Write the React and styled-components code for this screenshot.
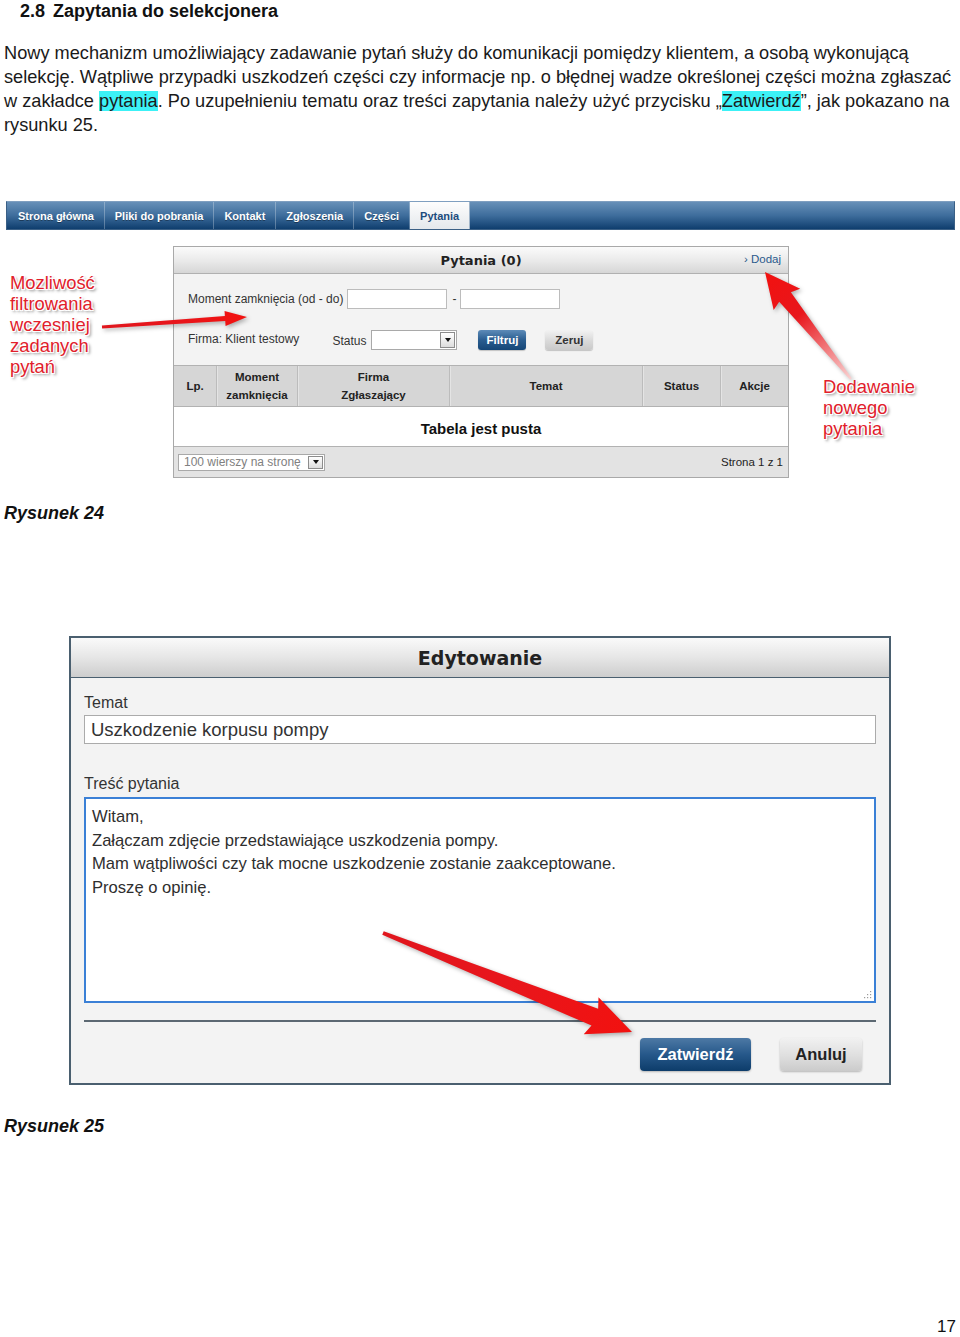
import React from 'react';
import styled, { createGlobalStyle } from 'styled-components';

const Global = createGlobalStyle`
  html, body { margin: 0; padding: 0; background: #fff; overflow: hidden; }
  body { font-family: "Liberation Sans", Arial, sans-serif; color: #111; }
`;

const Page = styled.div`
  width: 960px;
  height: 1337px;
  overflow: hidden;
  display: flex;
  flex-direction: column;
  box-sizing: border-box;
`;

const Heading = styled.h2`
  margin: 0;
  padding-left: 20px;
  display: flex;
  gap: 8px;
  font-size: 18px;
  line-height: 22px;
  font-weight: bold;
  color: #111;
`;

const Para = styled.p`
  margin: 19px 0 0 4px;
  font-size: 18.2px;
  line-height: 24px;
  white-space: nowrap;
  color: #1a1a1a;
`;

const Mark = styled.span`
  background: #3cf1f6;
`;

const Caption = styled.div`
  margin-top: ${p => p.$top}px;
  padding-left: 4px;
  font-size: 18px;
  line-height: 22px;
  font-weight: bold;
  font-style: italic;
  color: #111;
`;

/* ---------- Figure 24 ---------- */
const Figure = styled.div`
  position: relative;
  margin-top: 64px;
  padding: 0 5px 0 6px;
`;

const NavBar = styled.div`
  height: 29px;
  display: flex;
  box-sizing: border-box;
  border: 1px solid #3a5f85;
  border-top-color: #7f9fc0;
  background: linear-gradient(#6790b8, #3e6d9c 50%, #0f3e6e);
`;

const Tab = styled.div`
  display: flex;
  align-items: center;
  padding: 0 10px 0 ${p => (p.$first ? 11 : 10)}px;
  font-size: 11px;
  font-weight: bold;
  color: ${p => (p.$active ? '#1d4c7d' : '#fff')};
  background: ${p => (p.$active ? 'linear-gradient(#fdfdfd, #e4e8ec)' : 'transparent')};
  border-right: 1px solid ${p => (p.$active ? '#9fb4c9' : 'rgba(255,255,255,0.28)')};
  text-shadow: ${p => (p.$active ? 'none' : '0 1px 0 rgba(0,0,0,0.35)')};
`;

const FigRow = styled.div`
  display: grid;
  grid-template-columns: 167px 616px 1fr;
  margin-top: 16px;
`;

const Callout = styled.div`
  padding-top: ${p => p.$top}px;
  padding-left: ${p => p.$left}px;
  font-size: 18.4px;
  line-height: 21px;
  color: #e1202b;
  text-shadow: -1px -1px 0 #fff, 1px -1px 0 #fff, -1px 1px 0 #fff, 1px 1px 0 #fff,
    2px 2px 3px rgba(0, 0, 0, 0.55);
`;

const Panel = styled.div`
  border: 1px solid #a9a9a9;
  background: #f3f3f3;
  display: flex;
  flex-direction: column;
`;

const PanelHead = styled.div`
  position: relative;
  height: 26px;
  display: flex;
  align-items: center;
  justify-content: center;
  border-bottom: 1px solid #b0b0b0;
  background: linear-gradient(#fbfbfb, #e9e9e9 55%, #d6d6d6);
  font-family: "DejaVu Sans", Verdana, sans-serif;
  font-size: 13px;
  font-weight: bold;
  color: #222;
`;

const HeadLink = styled.span`
  position: absolute;
  right: 7px;
  top: 6px;
  font-family: "Liberation Sans", Arial, sans-serif;
  font-size: 11.5px;
  font-weight: normal;
  color: #2a5a8c;
`;

const Filters = styled.div`
  height: 91px;
  box-sizing: border-box;
  padding: 15px 14px 0;
  display: flex;
  flex-direction: column;
  gap: 21px;
  font-size: 12px;
  color: #333;
`;

const FRow = styled.div`
  height: 20px;
  display: flex;
  align-items: center;
`;

const FLabel = styled.span`
  margin-right: ${p => p.$mr || 0}px;
  margin-top: ${p => p.$mt || 0}px;
`;

const FInput = styled.input`
  width: ${p => p.$w}px;
  height: 20px;
  box-sizing: border-box;
  border: 1px solid #bcbcbc;
  background: #fff;
  padding: 0;
  margin: 0;
`;

const Dash = styled.span`
  margin: 0 4px 0 5px;
`;

const SelectBox = styled.div`
  width: ${p => p.$w}px;
  height: ${p => p.$h}px;
  box-sizing: border-box;
  display: flex;
  align-items: center;
  justify-content: space-between;
  padding-left: 5px;
  border: 1px solid #a9a9a9;
  background: #fff;
  font-size: 12px;
  color: #808080;
  margin-right: ${p => p.$mr || 0}px;
`;

const SelectBtn = styled.span`
  width: 15px;
  height: calc(100% - 2px);
  margin-right: 1px;
  box-sizing: border-box;
  border: 1px solid #8c8c8c;
  background: linear-gradient(#fff, #dcdcdc);
  display: flex;
  align-items: center;
  justify-content: center;
  &::after {
    content: '';
    border-left: 3px solid transparent;
    border-right: 3px solid transparent;
    border-top: 4px solid #111;
  }
`;

const SmallBtn = styled.div`
  width: 48px;
  height: 20px;
  border-radius: 3px;
  display: flex;
  align-items: center;
  justify-content: center;
  font-size: 11.5px;
  font-weight: bold;
  margin-right: ${p => p.$mr || 0}px;
  color: ${p => (p.$primary ? '#fff' : '#333')};
  background: ${p =>
    p.$primary ? 'linear-gradient(#5d8bb8, #2a5d90 50%, #154677)' : 'linear-gradient(#f2f2f2, #d9d9d9 55%, #c9c9c9)'};
  box-shadow: 0 1px 1px rgba(0, 0, 0, 0.2);
`;

const TableHead = styled.div`
  height: 42px;
  box-sizing: border-box;
  display: grid;
  grid-template-columns: 42px 81px 152px 193px 78px 1fr;
  border-top: 1px solid #b2b2b2;
  border-bottom: 1px solid #b2b2b2;
  background: #d6d6d6;
`;

const Th = styled.div`
  display: flex;
  align-items: center;
  justify-content: center;
  text-align: center;
  font-size: 11.5px;
  line-height: 18px;
  font-weight: bold;
  color: #222;
  border-left: ${p => (p.$first ? 'none' : '1px solid #bcbcbc')};
  box-shadow: ${p => (p.$first ? 'none' : 'inset 1px 0 0 #e4e4e4')};
`;

const EmptyRow = styled.div`
  height: 40px;
  box-sizing: border-box;
  display: flex;
  align-items: center;
  justify-content: center;
  padding-top: 3px;
  background: #fff;
  border-bottom: 1px solid #b2b2b2;
  font-size: 15px;
  font-weight: bold;
  color: #111;
`;

const Footer = styled.div`
  height: 30px;
  display: flex;
  align-items: center;
  justify-content: space-between;
  padding: 0 5px 0 4px;
  background: #e3e3e3;
  font-size: 11.5px;
  color: #222;
`;

const Overlay = styled.svg`
  position: absolute;
  left: ${p => p.$x || 0}px;
  top: ${p => p.$y || 0}px;
  overflow: visible;
  pointer-events: none;
  z-index: 2;
  filter: drop-shadow(2px 2px 2px rgba(0, 0, 0, 0.3));
`;

/* ---------- Figure 25 ---------- */
const EditPanel = styled.div`
  position: relative;
  margin: 112px 0 0 69px;
  width: 822px;
  height: 450px;
  box-sizing: border-box;
  border: 2px solid #4a5f6f;
  background: #f3f3f3;
  display: flex;
  flex-direction: column;
`;

const EditHead = styled.div`
  height: 39px;
  display: flex;
  align-items: center;
  justify-content: center;
  border-bottom: 1px solid #4a5f6f;
  background: linear-gradient(#fafafa, #e6e6e6 50%, #cdcdcd);
  font-family: "DejaVu Sans", Verdana, sans-serif;
  font-size: 19px;
  font-weight: bold;
  color: #222;
`;

const EditBody = styled.div`
  padding: 15px 13px 0 13px;
  display: flex;
  flex-direction: column;
`;

const FieldLabel = styled.div`
  font-size: 16px;
  line-height: 20px;
  color: #333;
  margin-top: ${p => p.$top || 0}px;
`;

const TextInput = styled.input`
  margin-top: 2px;
  height: 29px;
  width: 100%;
  box-sizing: border-box;
  border: 1px solid #ababab;
  background: #fff;
  padding: 0 6px;
  font-family: "Liberation Sans", Arial, sans-serif;
  font-size: 18.5px;
  color: #333;
  outline: none;
`;

const TextArea = styled.div`
  position: relative;
  margin-top: 3px;
  height: 206px;
  box-sizing: border-box;
  border: 2px solid #3b80d6;
  background: #fff;
  padding: 6px 6px;
  font-size: 16.6px;
  line-height: 23.5px;
  color: #2e2e2e;
  white-space: pre-line;
`;

const Grip = styled.svg`
  position: absolute;
  right: 2px;
  bottom: 2px;
`;

const Divider = styled.div`
  margin-top: 17px;
  height: 2px;
  background: #5c6872;
`;

const BtnRow = styled.div`
  margin-top: 16px;
  padding-right: 14px;
  display: flex;
  justify-content: flex-end;
  gap: 29px;
`;

const BigBtn = styled.div`
  width: ${p => p.$w}px;
  height: 33px;
  border-radius: 4px;
  display: flex;
  align-items: center;
  justify-content: center;
  font-size: 16.5px;
  font-weight: bold;
  color: ${p => (p.$primary ? '#fff' : '#222')};
  background: ${p =>
    p.$primary ? 'linear-gradient(#4d79a5, #26588a 50%, #0d3c6a)' : 'linear-gradient(#f1f1f1, #dedede 55%, #cbcbcb)'};
  box-shadow: 0 1px 2px rgba(0, 0, 0, 0.25);
`;

const PageNum = styled.div`
  margin-top: 180px;
  align-self: flex-end;
  padding-right: 4px;
  font-size: 17px;
  line-height: 20px;
  color: #111;
`;

function Arrow({ id, from, to, tail, neck, headW, headL, sweep = 0, fade }) {
  const dx = to[0] - from[0];
  const dy = to[1] - from[1];
  const L = Math.hypot(dx, dy);
  const ang = (Math.atan2(dy, dx) * 180) / Math.PI;
  const b = L - headL;
  const pts = [
    [0, -tail],
    [b, -neck],
    [b - sweep, -headW],
    [L, 0],
    [b - sweep, headW],
    [b, neck],
    [0, tail],
  ]
    .map(p => p.join(','))
    .join(' ');
  return (
    <g transform={`translate(${from[0]} ${from[1]}) rotate(${ang})`}>
      <defs>
        <linearGradient id={id} gradientUnits="userSpaceOnUse" x1="0" y1="0" x2={L} y2="0">
          <stop offset="0" stopColor={fade ? '#f9d2d2' : '#e0161d'} />
          <stop offset={fade ? 0.6 : 0.5} stopColor="#e8161c" />
          <stop offset="1" stopColor="#f2110f" />
        </linearGradient>
      </defs>
      <polygon points={pts} fill={`url(#${id})`} />
    </g>
  );
}

const tabs = ['Strona główna', 'Pliki do pobrania', 'Kontakt', 'Zgłoszenia', 'Części'];

export default function App() {
  return (
    <Page>
      <Global />
      <Heading>
        <span>2.8</span>
        <span>Zapytania do selekcjonera</span>
      </Heading>
      <Para>
        Nowy mechanizm umożliwiający zadawanie pytań służy do komunikacji pomiędzy klientem, a osobą wykonującą
        <br />
        selekcję. Wątpliwe przypadki uszkodzeń części czy informacje np. o błędnej wadze określonej części można zgłaszać
        <br />
        w zakładce <Mark>pytania</Mark>. Po uzupełnieniu tematu oraz treści zapytania należy użyć przycisku „<Mark>Zatwierdź</Mark>”, jak pokazano na
        <br />
        rysunku 25.
      </Para>

      <Figure>
        <NavBar>
          {tabs.map((t, i) => (
            <Tab key={t} $first={i === 0}>
              {t}
            </Tab>
          ))}
          <Tab $active>Pytania</Tab>
        </NavBar>
        <FigRow>
          <Callout $top={26} $left={4}>
            Mozliwość
            <br />
            filtrowania
            <br />
            wczesniej
            <br />
            zadanych
            <br />
            pytań
          </Callout>
          <Panel>
            <PanelHead>
              Pytania (0)
              <HeadLink>› Dodaj</HeadLink>
            </PanelHead>
            <Filters>
              <FRow>
                <FLabel $mr={4}>Moment zamknięcia (od - do)</FLabel>
                <FInput $w={100} readOnly />
                <Dash>-</Dash>
                <FInput $w={100} readOnly />
              </FRow>
              <FRow>
                <FLabel $mr={33} $mt={-2}>Firma: Klient testowy</FLabel>
                <FLabel $mr={5} $mt={2}>Status</FLabel>
                <SelectBox $w={86} $h={20} $mr={21}>
                  <span />
                  <SelectBtn />
                </SelectBox>
                <SmallBtn $primary $mr={19}>Filtruj</SmallBtn>
                <SmallBtn>Zeruj</SmallBtn>
              </FRow>
            </Filters>
            <TableHead>
              <Th $first>Lp.</Th>
              <Th>
                Moment
                <br />
                zamknięcia
              </Th>
              <Th>
                Firma
                <br />
                Zgłaszający
              </Th>
              <Th>Temat</Th>
              <Th>Status</Th>
              <Th>Akcje</Th>
            </TableHead>
            <EmptyRow>Tabela jest pusta</EmptyRow>
            <Footer>
              <SelectBox $w={147} $h={17}>
                100 wierszy na stronę
                <SelectBtn />
              </SelectBox>
              <span>Strona 1 z 1</span>
            </Footer>
          </Panel>
          <Callout $top={130} $left={34}>
            Dodawanie
            <br />
            nowego
            <br />
            pytania
          </Callout>
        </FigRow>
        <Overlay width="960" height="300">
          <Arrow id="a1" from={[102, 126]} to={[247, 116]} tail={1.6} neck={2.6} headW={7.5} headL={22} />
          <Arrow id="a2" from={[851, 178]} to={[765, 71]} tail={1} neck={7.5} headW={17} headL={32} sweep={3} fade />
        </Overlay>
      </Figure>

      <Caption $top={24}>Rysunek 24</Caption>

      <EditPanel>
        <EditHead>Edytowanie</EditHead>
        <EditBody>
          <FieldLabel>Temat</FieldLabel>
          <TextInput readOnly defaultValue="Uszkodzenie korpusu pompy" />
          <FieldLabel $top={30}>Treść pytania</FieldLabel>
          <TextArea>
            {'Witam,\nZałączam zdjęcie przedstawiające uszkodzenia pompy.\nMam wątpliwości czy tak mocne uszkodzenie zostanie zaakceptowane.\nProszę o opinię.'}
            <Grip width="10" height="10" viewBox="0 0 10 10">
              {[
                [8, 2],
                [8, 5],
                [5, 5],
                [8, 8],
                [5, 8],
                [2, 8],
              ].map(([x, y]) => (
                <rect key={`${x}-${y}`} x={x} y={y} width="1.2" height="1.2" fill="#9a9a9a" />
              ))}
            </Grip>
          </TextArea>
          <Divider />
          <BtnRow>
            <BigBtn $primary $w={111}>
              Zatwierdź
            </BigBtn>
            <BigBtn $w={82}>Anuluj</BigBtn>
          </BtnRow>
        </EditBody>
        <Overlay width="822" height="450" $x={-2} $y={-2}>
          <Arrow id="a3" from={[314, 297]} to={[563, 396]} tail={2} neck={9} headW={20} headL={40} sweep={4} />
        </Overlay>
      </EditPanel>

      <Caption $top={30}>Rysunek 25</Caption>
      <PageNum>17</PageNum>
    </Page>
  );
}
